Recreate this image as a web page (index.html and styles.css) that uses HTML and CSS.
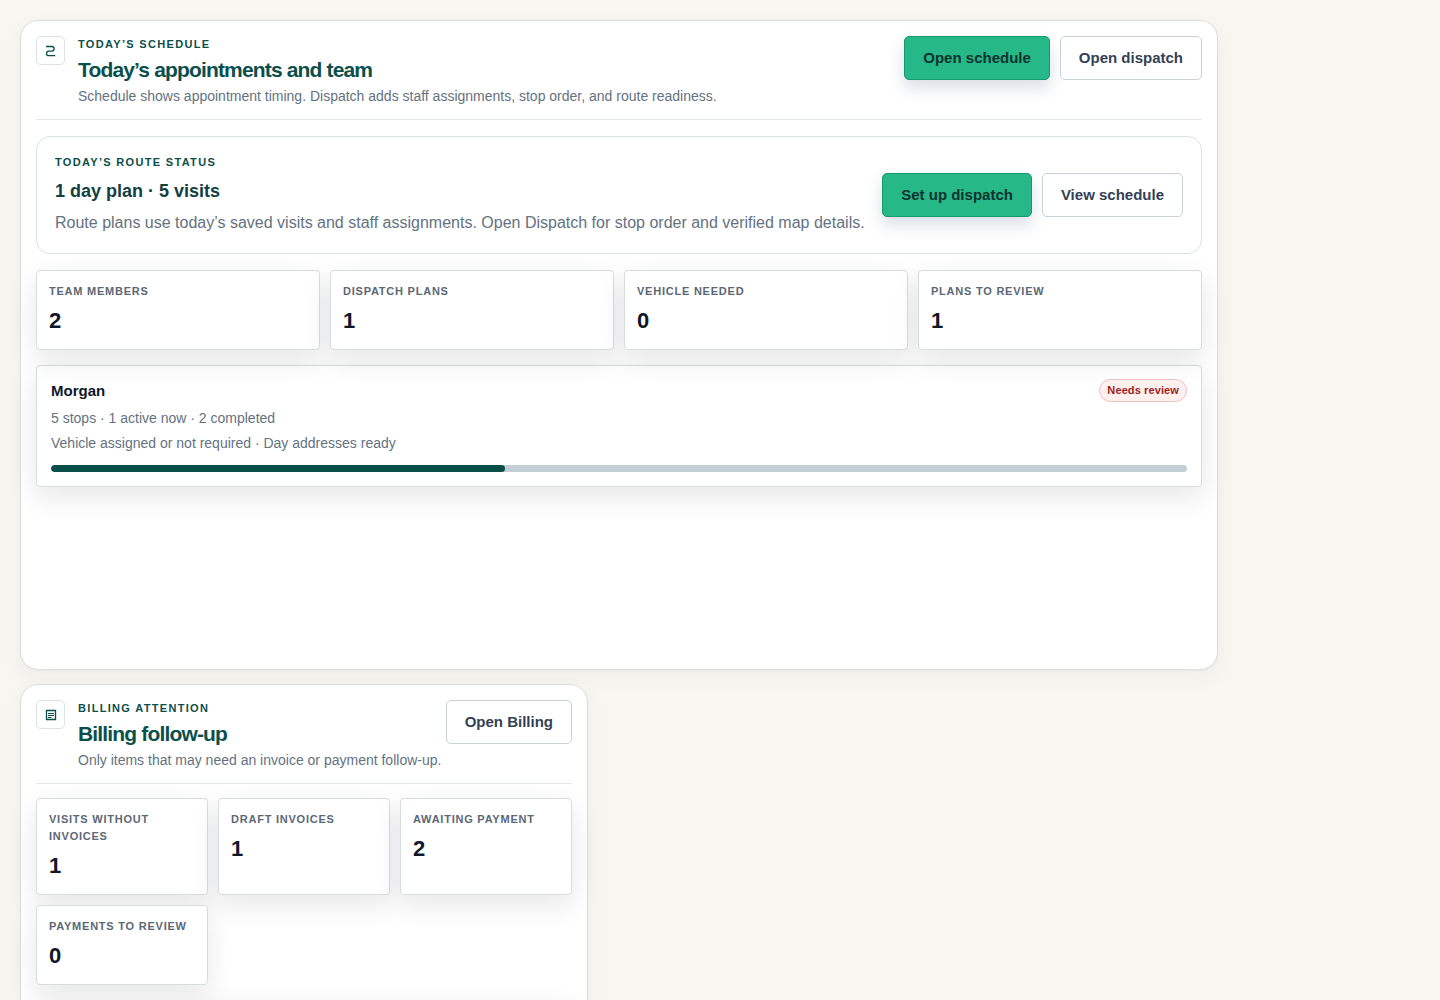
FILE: index.html
```html
<!DOCTYPE html>
<html lang="en">
<head>
<meta charset="utf-8">
<meta name="viewport" content="width=device-width, initial-scale=1">
<title>Today’s appointments and team</title>
<link rel="stylesheet" href="styles.css">
</head>
<body>
<main class="board">
  <section class="card card-schedule" aria-labelledby="schedule-title">
    <header class="card-header">
      <span class="card-icon">
        <svg viewBox="0 0 15 15" aria-hidden="true"><path d="M3 3.5h5.8a2.3 2.3 0 0 1 0 4.6H5.8a2.3 2.3 0 0 0 0 4.6h6.4"/></svg>
      </span>
      <div class="card-heading">
        <p class="eyebrow">Today’s schedule</p>
        <h2 class="card-title" id="schedule-title">Today’s appointments and team</h2>
        <p class="card-subtitle">Schedule shows appointment timing. Dispatch adds staff assignments, stop order, and route readiness.</p>
      </div>
      <div class="actions">
        <button type="button" class="button button-primary">Open schedule</button>
        <button type="button" class="button">Open dispatch</button>
      </div>
    </header>

    <section class="route-status">
      <div class="route-copy">
        <p class="eyebrow">Today’s route status</p>
        <h3 class="route-title">1 day plan · 5 visits</h3>
        <p class="route-text">Route plans use today’s saved visits and staff assignments. Open Dispatch for stop order and verified map details.</p>
      </div>
      <div class="actions">
        <button type="button" class="button button-primary">Set up dispatch</button>
        <button type="button" class="button">View schedule</button>
      </div>
    </section>

    <dl class="stats stats-four">
      <div class="stat"><dt>Team members</dt><dd>2</dd></div>
      <div class="stat"><dt>Dispatch plans</dt><dd>1</dd></div>
      <div class="stat"><dt>Vehicle needed</dt><dd>0</dd></div>
      <div class="stat"><dt>Plans to review</dt><dd>1</dd></div>
    </dl>

    <article class="panel">
      <div class="plan-head">
        <h3 class="plan-name">Morgan</h3>
        <span class="pill">Needs review</span>
      </div>
      <p class="plan-meta">5 stops · 1 active now · 2 completed</p>
      <p class="plan-meta">Vehicle assigned or not required · Day addresses ready</p>
      <div class="progress" role="progressbar" aria-label="Visits completed" aria-valuenow="40" aria-valuemin="0" aria-valuemax="100">
        <div class="progress-fill" style="width: 40%"></div>
      </div>
    </article>
  </section>

  <section class="card card-billing" aria-labelledby="billing-title">
    <header class="card-header">
      <span class="card-icon">
        <svg viewBox="0 0 15 15" aria-hidden="true"><path d="M3.5 3.5h9v9h-9z"/><path stroke-width="1" d="M5 6.5h6M5 8.5h6M5 10.5h3.5"/></svg>
      </span>
      <div class="card-heading">
        <p class="eyebrow">Billing attention</p>
        <h2 class="card-title" id="billing-title">Billing follow-up</h2>
        <p class="card-subtitle">Only items that may need an invoice or payment follow-up.</p>
      </div>
      <div class="actions">
        <button type="button" class="button">Open Billing</button>
      </div>
    </header>

    <dl class="stats stats-three">
      <div class="stat"><dt>Visits without invoices</dt><dd>1</dd></div>
      <div class="stat"><dt>Draft invoices</dt><dd>1</dd></div>
      <div class="stat"><dt>Awaiting payment</dt><dd>2</dd></div>
      <div class="stat"><dt>Payments to review</dt><dd>0</dd></div>
    </dl>

    <div class="panel"></div>
  </section>
</main>
</body>
</html>
```

FILE: styles.css
```css
* {
  box-sizing: border-box;
}

body {
  margin: 0;
  background: #f7f6f1;
  color: #0f172a;
  font-family: "Liberation Sans", Arial, sans-serif;
}

h2, h3, p, dl, dd {
  margin: 0;
}

.board {
  display: flex;
  flex-direction: column;
  gap: 14px;
  max-width: 1238px;
  padding: 20px;
}

.card {
  padding: 15px;
  border: 1px solid #d9e0dd;
  border-radius: 18px;
  background: #fff;
  box-shadow: 0 1px 2px rgba(15, 23, 42, 0.04), 0 8px 24px rgba(60, 60, 30, 0.04);
}

.card-schedule {
  min-height: 650px;
}

.card-billing {
  width: 100%;
  max-width: 568px;
}

.card-header {
  display: flex;
  align-items: flex-start;
  padding-bottom: 13px;
  border-bottom: 1px solid #e2e8e8;
}

.card-icon {
  display: flex;
  flex: none;
  align-items: center;
  justify-content: center;
  width: 29px;
  height: 29px;
  margin-right: 13px;
  border: 1px solid #dbe3e8;
  border-radius: 5px;
}

.card-icon svg {
  width: 15px;
  height: 15px;
  fill: none;
  stroke: #0b4f4a;
  stroke-width: 1.3;
}

.card-heading {
  flex: 1;
  min-width: 0;
}

.eyebrow {
  color: #0b4f4a;
  font-size: 11px;
  font-weight: 700;
  line-height: 16px;
  letter-spacing: 0.12em;
  text-transform: uppercase;
}

.card-title {
  margin-top: 6px;
  color: #0b4f4a;
  font-size: 21px;
  line-height: 24px;
  letter-spacing: -0.04em;
}

.card-subtitle {
  margin-top: 4px;
  color: #64727f;
  font-size: 14px;
  line-height: 20px;
}

.actions {
  display: flex;
  flex: none;
  gap: 10px;
}

.button {
  height: 44px;
  padding: 0 18px;
  border: 1px solid #c8d0dc;
  border-radius: 5px;
  background: #fff;
  color: #334155;
  font: 700 15px/20px "Liberation Sans", Arial, sans-serif;
}

.button-primary {
  border-color: #169a6d;
  background: #27b887;
  color: #0c3330;
  box-shadow: 0 8px 16px rgba(51, 75, 110, 0.18);
}

.route-status {
  display: flex;
  align-items: center;
  justify-content: space-between;
  gap: 16px;
  margin-top: 16px;
  padding: 17px 18px;
  border: 1px solid #d9e4e1;
  border-radius: 14px;
}

.route-title {
  margin-top: 9px;
  color: #143f42;
  font-size: 18px;
  line-height: 24px;
}

.route-text {
  margin-top: 6px;
  color: #64727f;
  font-size: 16px;
  line-height: 27px;
}

.stats {
  display: grid;
  gap: 10px;
}

.stats-four {
  grid-template-columns: repeat(4, 1fr);
  margin-top: 16px;
}

.stats-three {
  grid-template-columns: repeat(3, 1fr);
  margin-top: 14px;
}

.stat,
.panel {
  border: 1px solid #d6dddb;
  border-radius: 4px;
  background: #fff;
  box-shadow: 0 10px 28px rgba(15, 23, 42, 0.1);
}

.stat {
  padding: 12px 12px 16px;
}

.stat dt {
  color: #5b6875;
  font-size: 11px;
  font-weight: 700;
  line-height: 17px;
  letter-spacing: 0.07em;
  text-transform: uppercase;
}

.stat dd {
  margin-top: 9px;
  font-size: 22px;
  font-weight: 700;
  line-height: 24px;
}

.panel {
  min-height: 122px;
  margin-top: 15px;
  padding: 13px 14px 14px;
}

.plan-head {
  display: flex;
  align-items: center;
  justify-content: space-between;
  margin-bottom: 6px;
}

.plan-name {
  font-size: 15px;
  line-height: 20px;
}

.pill {
  padding: 0 7px;
  border: 1px solid #efc0c0;
  border-radius: 12px;
  background: #fff0f0;
  color: #9f1d1d;
  font-size: 11px;
  font-weight: 700;
  line-height: 21px;
  letter-spacing: 0.01em;
}

.plan-meta {
  margin-bottom: 4px;
  color: #64727f;
  font-size: 14px;
  line-height: 21px;
}

.progress {
  height: 7px;
  margin-top: 11px;
  overflow: hidden;
  border-radius: 4px;
  background: #c4ced6;
}

.progress-fill {
  height: 100%;
  border-radius: 4px;
  background: #0b4f4a;
}
```
